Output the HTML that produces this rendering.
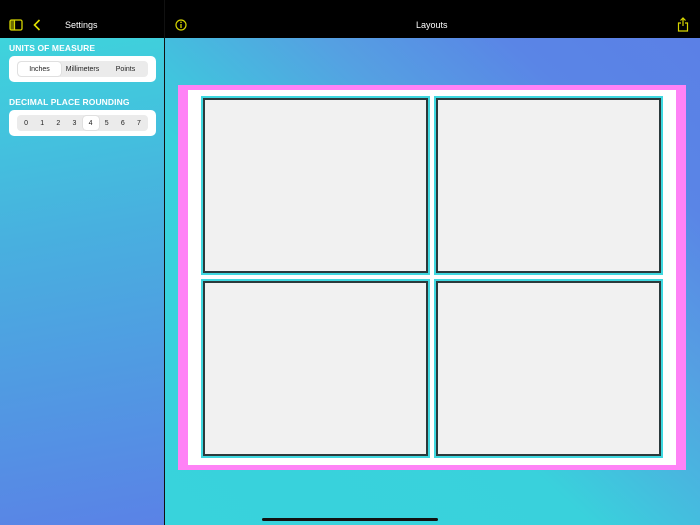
<!DOCTYPE html>
<html><head><style>
*{margin:0;padding:0;box-sizing:border-box}
body{width:700px;height:525px;overflow:hidden;position:relative;font-family:"Liberation Sans",sans-serif;background:#000}
.top{position:absolute;left:0;top:0;width:700px;height:38px;background:#000}
.side{position:absolute;left:0;top:38px;width:164px;height:487px;background:linear-gradient(170deg,#3ed4dc 0%,#48b0df 40%,#5a82e6 100%)}
.div{position:absolute;left:164px;top:0;width:1px;height:525px;background:#2a2a2a;opacity:.4}
.main{position:absolute;left:165px;top:38px;width:535px;height:487px;background:linear-gradient(to top right,#38d3dc 0%,#39d1dc 40%,#55a0e2 65%,#5a85e6 82%,#5b80e6 100%)}
.t{position:absolute;color:#fff;font-size:9px}
.hdr{position:absolute;left:9px;color:#fff;font-size:8.5px;font-weight:bold;letter-spacing:.1px}
.card{position:absolute;left:9px;width:147px;height:26px;background:#fff;border-radius:5px}
.seg{position:absolute;left:8px;top:5px;width:131px;height:16px;background:#ebebeb;border-radius:4px;display:flex;font-size:7px;color:#222;padding:1px}
.seg span{flex:1;height:14px;display:flex;align-items:center;justify-content:center;font-weight:500}
.sel{background:#fff;border-radius:3px;box-shadow:0 0 1px rgba(0,0,0,.3)}
.pink{position:absolute;left:178px;top:85px;width:508px;height:385px;background:#ff82f6}
.white{position:absolute;left:188px;top:90px;width:488px;height:375px;background:#fff}
.cell{position:absolute;width:229px;height:179px;border:2px solid #3fd8e0}
.cell div{width:100%;height:100%;border:2px solid #2b3a3c;background:#f1f1f1}
</style></head><body>
<div class="top"></div>
<div class="side">
<div class="hdr" style="top:5px">UNITS OF MEASURE</div>
<div class="card" style="top:18px"><div class="seg"><span class="sel">Inches</span><span>Millimeters</span><span>Points</span></div></div>
<div class="hdr" style="top:59px">DECIMAL PLACE ROUNDING</div>
<div class="card" style="top:72px"><div class="seg"><span>0</span><span>1</span><span>2</span><span>3</span><span class="sel">4</span><span>5</span><span>6</span><span>7</span></div></div>
</div>
<div class="main"></div>
<div class="div"></div>
<svg style="position:absolute;left:9px;top:19px" width="14" height="12" viewBox="0 0 14 12"><rect x="1" y="1" width="12" height="10" rx="1.5" fill="none" stroke="#d6d600" stroke-width="1.3"/><rect x="1.5" y="1.5" width="4" height="9" fill="#d6d600" opacity=".5"/><line x1="5.5" y1="1" x2="5.5" y2="11" stroke="#d6d600" stroke-width="1.2"/></svg>
<svg style="position:absolute;left:33px;top:19px" width="8" height="12" viewBox="0 0 8 12"><path d="M6.5 1 L1.5 6 L6.5 11" fill="none" stroke="#e0e000" stroke-width="1.6"/></svg>
<div class="t" style="left:65px;top:20px">Settings</div>
<svg style="position:absolute;left:175px;top:19px" width="12" height="12" viewBox="0 0 12 12"><circle cx="6" cy="6" r="5" fill="none" stroke="#d6d600" stroke-width="1.2"/><line x1="6" y1="5" x2="6" y2="9" stroke="#d6d600" stroke-width="1.3"/><circle cx="6" cy="3.3" r=".8" fill="#d6d600"/></svg>
<div class="t" style="left:416px;top:20px">Layouts</div>
<svg style="position:absolute;left:677px;top:17px" width="12" height="15" viewBox="0 0 12 15"><path d="M4 6 H1.5 V14 H10.5 V6 H8" fill="none" stroke="#d6d600" stroke-width="1.2"/><path d="M6 9 V1 M3.5 3.5 L6 1 L8.5 3.5" fill="none" stroke="#d6d600" stroke-width="1.2"/></svg>
<div class="pink"></div>
<div class="white"></div>
<div class="cell" style="left:201px;top:96px"><div></div></div>
<div class="cell" style="left:434px;top:96px"><div></div></div>
<div class="cell" style="left:201px;top:279px"><div></div></div>
<div class="cell" style="left:434px;top:279px"><div></div></div>
<div style="position:absolute;left:262px;top:518px;width:176px;height:3px;border-radius:2px;background:#111"></div>
</body></html>
